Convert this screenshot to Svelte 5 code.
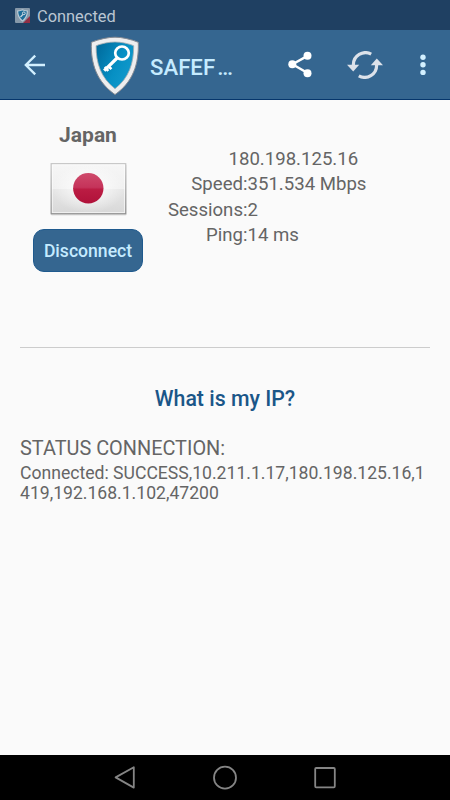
<script>
    let country = "Japan";
    let title = "SAFEF";
    let stats = [
        { label: "", value: "180.198.125.16" },
        { label: "Speed:", value: "351.534 Mbps" },
        { label: "Sessions:", value: "2" },
        { label: "Ping:", value: "14 ms" },
    ];
    let status = "Connected: SUCCESS,10.211.1.17,180.198.125.16,1419,192.168.1.102,47200";
    let connected = true;

    function toggleConnection() {
        connected = !connected;
    }
</script>

<div class="app">
    <div class="status-bar">
        <svg class="notification" viewBox="0 0 15 15">
            <rect width="15" height="15" rx="1" fill="#8799a9" />
            <path d="M7.5 1.2Q10 2.4 13 2.6Q13 10 7.5 13.8Q2 10 2 2.6Q5 2.4 7.5 1.2Z" fill="#b9cad6" />
            <path d="M7.5 2.5L11.8 3.6Q11.5 9 7.5 12.2Q3.5 9 3.2 3.6Z" fill="#1c6d99" />
            <path d="M5.5 9L8 6.3" stroke="#cfdae2" stroke-width="1.2" />
            <circle cx="8.8" cy="5.3" r="1.4" fill="none" stroke="#cfdae2" />
            <path d="M15 8V15H8Z" fill="#922f45" />
        </svg>
        <span>Connected</span>
    </div>

    <div class="toolbar">
        <button class="icon back" aria-label="Back">
            <svg width="22" height="22" viewBox="0 0 22 22" fill="none" stroke="#d3f0ff" stroke-width="2.3">
                <path d="M21 11H2.5M11.2 1.6L1.8 11L11.2 20.4" />
            </svg>
        </button>
        <svg class="logo" width="50" height="60" viewBox="0 0 50 60">
            <defs>
                <linearGradient id="shield" x1="0" y1="0.2" x2="1" y2="0.8">
                    <stop offset="0" stop-color="#006d9f" />
                    <stop offset="0.55" stop-color="#0790c4" />
                    <stop offset="1" stop-color="#159cce" />
                </linearGradient>
            </defs>
            <path d="M25 1.2C32 1.2 41 3.2 48.3 6.3C49 28 43 46 25 58.6C7 46 .5 28 1.4 6.3C9 3.2 18 1.2 25 1.2Z" fill="#eeeeef" stroke="#858a92" stroke-width="1" />
            <path d="M25 6C31 6 38 7.4 43.7 9.7C43.8 27 39 42 25 52.7C11 42 5.9 27 6.1 9.7C12 7.4 19 6 25 6Z" fill="url(#shield)" stroke="#a5adb3" stroke-width=".8" />
            <g fill="none" stroke="#fff">
                <ellipse cx="32" cy="17" rx="6.8" ry="6.5" stroke-width="2.7" />
                <path d="M27.1 22L14.2 34.7" stroke-width="3.2" />
                <path d="M18.8 30.5L21.4 33.2M15 30.8L18.2 35" stroke-width="2.6" />
            </g>
        </svg>
        <h1>{title}<span class="dots">…</span></h1>
        <button class="icon share" aria-label="Share">
            <svg width="24" height="27" viewBox="0 0 24 27">
                <path d="M20 4.6L4.5 13.3L20 22.3" fill="none" stroke="#fff" stroke-width="2.4" />
                <circle cx="19.5" cy="4.7" r="4" fill="#fff" />
                <circle cx="4.3" cy="13.3" r="4" fill="#fff" />
                <circle cx="19.5" cy="22.2" r="4" fill="#fff" />
            </svg>
        </button>
        <button class="icon refresh" aria-label="Refresh">
            <svg width="36" height="28" viewBox="0 0 36 28">
                <g fill="none" stroke="#dce2ea" stroke-width="3.2">
                    <path d="M24.2 3.2A12 12 0 0 0 6.4 14" />
                    <path d="M11.8 24.8A12 12 0 0 0 29.6 14" />
                </g>
                <path d="M0 13.8H12.2L6.2 20.4Z" fill="#dce2ea" />
                <path d="M23.8 14.2H36L29.8 7.4Z" fill="#dce2ea" />
            </svg>
        </button>
        <button class="icon more" aria-label="More">
            <svg width="6" height="22" viewBox="0 0 6 22" fill="#d3f0ff">
                <circle cx="3" cy="3.2" r="2.7" />
                <circle cx="3" cy="10.8" r="2.7" />
                <circle cx="3" cy="18.4" r="2.7" />
            </svg>
        </button>
    </div>

    <main>
        <section class="server">
            <div class="location">
                <h2>{country}</h2>
                <svg class="flag" width="78" height="54" viewBox="0 0 78 54">
                    <defs>
                        <linearGradient id="cloth" x1="0" y1="0" x2="0" y2="1">
                            <stop offset="0" stop-color="#f6f6f6" />
                            <stop offset="0.5" stop-color="#f0f0f0" />
                            <stop offset="0.51" stop-color="#e6e6e6" />
                            <stop offset="1" stop-color="#d8d8d8" />
                        </linearGradient>
                        <radialGradient id="glow">
                            <stop offset="0" stop-color="#fff" stop-opacity=".95" />
                            <stop offset="1" stop-color="#fff" stop-opacity="0" />
                        </radialGradient>
                        <linearGradient id="sun" x1="0" y1="0" x2="0" y2="1">
                            <stop offset="0" stop-color="#cf4a6b" />
                            <stop offset="0.47" stop-color="#c5335a" />
                            <stop offset="0.54" stop-color="#bb1c43" />
                            <stop offset="1" stop-color="#b0123a" />
                        </linearGradient>
                        <linearGradient id="frame" x1="0" y1="0" x2="0" y2="1">
                            <stop offset="0" stop-color="#c6c6c6" />
                            <stop offset="1" stop-color="#929292" />
                        </linearGradient>
                    </defs>
                    <rect x="2" y="2.5" width="75.5" height="51" rx="1" fill="#dedede" />
                    <rect x="2.2" y="1.7" width="74.5" height="50" fill="url(#cloth)" stroke="url(#frame)" stroke-width="1.3" />
                    <rect x="3.2" y="2.7" width="72.5" height="48" fill="url(#glow)" />
                    <rect x="3.3" y="2.8" width="72.3" height="47.8" fill="none" stroke="#fff" stroke-opacity=".65" />
                    <circle cx="39.3" cy="26.2" r="15.2" fill="url(#sun)" />
                </svg>
                <button class="disconnect" on:click={toggleConnection}>
                    {connected ? "Disconnect" : "Connect"}
                </button>
            </div>
            <div class="stats">
                {#each stats as stat}
                <span class="label">{stat.label}</span>
                <span class:address={!stat.label}>{stat.value}</span>
                {/each}
            </div>
        </section>

        <hr />
        <h3>What is my IP?</h3>
        <h4>STATUS CONNECTION:</h4>
        <p>{status}</p>
    </main>

    <div class="nav-bar">
        <svg width="24" height="26" viewBox="0 0 24 26">
            <path d="M20.8 2.2V22.6L2.6 12.4Z" />
        </svg>
        <svg width="24" height="26" viewBox="0 0 24 26">
            <circle cx="12" cy="12.7" r="11" />
        </svg>
        <svg width="24" height="26" viewBox="0 0 24 26">
            <rect x="2.2" y="3" width="19.6" height="19.3" rx="1" />
        </svg>
    </div>
</div>

<style>
    :global(body) {
        margin: 0;
    }
    .app {
        display: flex;
        flex-direction: column;
        width: 450px;
        height: 800px;
        overflow: hidden;
        background-color: #fafafa;
        color: #656565;
        font-family: Roboto, sans-serif;
    }
    .status-bar {
        display: flex;
        align-items: center;
        gap: 7px;
        box-sizing: border-box;
        height: 30px;
        padding: 2px 0 0 15px;
        background-color: #1f4062;
        color: #bac6d2;
        font-size: 16.4px;
    }
    .notification {
        width: 15px;
        height: 15px;
        margin-top: -1px;
    }
    .toolbar {
        display: flex;
        align-items: center;
        box-sizing: border-box;
        height: 70px;
        border-bottom: 1px solid #06366c;
        background-color: #356690;
    }
    button {
        padding: 0;
        border: 0;
        background: none;
        font-family: inherit;
        cursor: pointer;
    }
    .icon svg {
        display: block;
    }
    .back {
        margin-left: 24px;
    }
    .logo {
        margin: 2px 0 0 43.5px;
    }
    h1 {
        width: 95px;
        margin: 5px 0 0 10.5px;
        color: #c5ebff;
        font-size: 22.2px;
        font-weight: 500;
        white-space: nowrap;
    }
    .dots {
        margin-left: 2px;
    }
    .share {
        margin-left: 43px;
    }
    .refresh {
        margin-left: 35px;
    }
    .more {
        margin-left: 37px;
    }
    main {
        flex: 1;
        padding: 0 20px;
    }
    .server {
        display: flex;
        height: 247px;
    }
    .location {
        display: flex;
        flex-direction: column;
        align-items: center;
        width: 136px;
    }
    h2 {
        margin: 23px 0 14px;
        font-size: 21px;
        font-weight: 700;
        line-height: 25px;
    }
    .disconnect {
        width: 110px;
        height: 43px;
        margin-top: 13px;
        border: 1px solid #1f5a8e;
        border-radius: 11px;
        background-color: #356690;
        color: #c5ebff;
        font-size: 17.6px;
        font-weight: 500;
    }
    .stats {
        display: grid;
        grid-template-columns: 91.5px auto;
        grid-auto-rows: 25.5px;
        align-content: start;
        padding-top: 46.5px;
        font-size: 18.6px;
        line-height: 25.5px;
    }
    .label {
        text-align: right;
    }
    .address {
        margin-left: -19px;
    }
    hr {
        height: 1px;
        margin: 0;
        border: 0;
        background-color: #cccccc;
    }
    h3 {
        margin: 37px 0 0;
        color: #1a5688;
        font-size: 21.3px;
        font-weight: 500;
        line-height: 27px;
        text-align: center;
    }
    h4 {
        margin: 24px 0 0;
        font-size: 19.9px;
        font-weight: 400;
        line-height: 26px;
    }
    p {
        margin: 1px 0 0;
        font-size: 17.6px;
        line-height: 20.4px;
        word-break: break-all;
    }
    .nav-bar {
        display: flex;
        align-items: center;
        justify-content: center;
        gap: 76px;
        height: 45px;
        background-color: #000;
    }
    .nav-bar svg {
        fill: none;
        stroke: #858585;
        stroke-width: 1.8;
        stroke-linejoin: round;
    }
</style>
